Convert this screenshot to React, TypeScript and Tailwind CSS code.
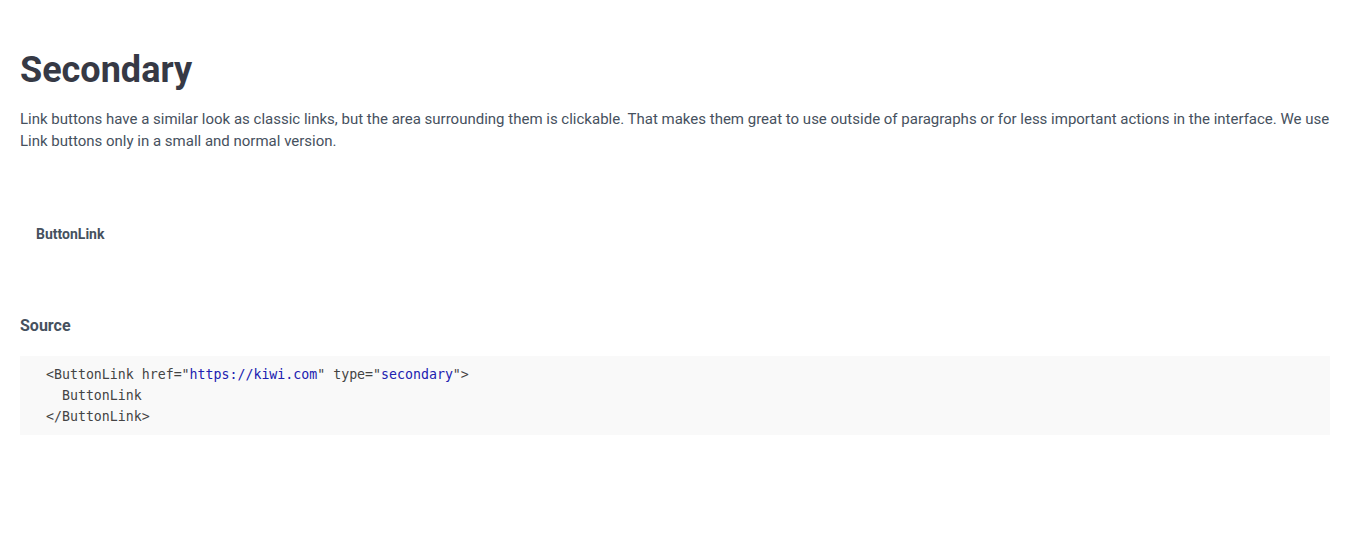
import React from "react";

export default function App() {
  return (
    <div className="min-h-[555px] bg-white px-5 pt-[47px] font-['Roboto',sans-serif]">
      <h1 className="text-[36px] font-bold leading-[46px] text-[#363945]">Secondary</h1>
      <p className="mt-[15px] text-[15px] leading-[22px] text-[#46515e]">
        Link buttons have a similar look as classic links, but the area surrounding them is clickable. That makes them great to use outside of paragraphs or for less important actions in the interface. We use Link buttons only in a small and normal version.
      </p>
      <div className="mt-[60px]">
        <a className="inline-flex h-11 items-center px-4 text-[14px] font-bold text-[#46515e]">ButtonLink</a>
      </div>
      <h3 className="mt-[59px] text-[16px] font-bold leading-[22px] text-[#46515e]">Source</h3>
      <pre className="mt-[19px] bg-[#f9f9f9] px-[26px] py-[8px] font-['DejaVu_Sans_Mono',monospace] text-[13.25px] leading-[21px] text-[#444444]">
        <span>{"<ButtonLink href=\""}</span>
        <span className="text-[#2020b0]">https://kiwi.com</span>
        <span>{"\" type=\""}</span>
        <span className="text-[#2020b0]">secondary</span>
        <span>{"\">\n  ButtonLink\n</ButtonLink>"}</span>
      </pre>
    </div>
  );
}
